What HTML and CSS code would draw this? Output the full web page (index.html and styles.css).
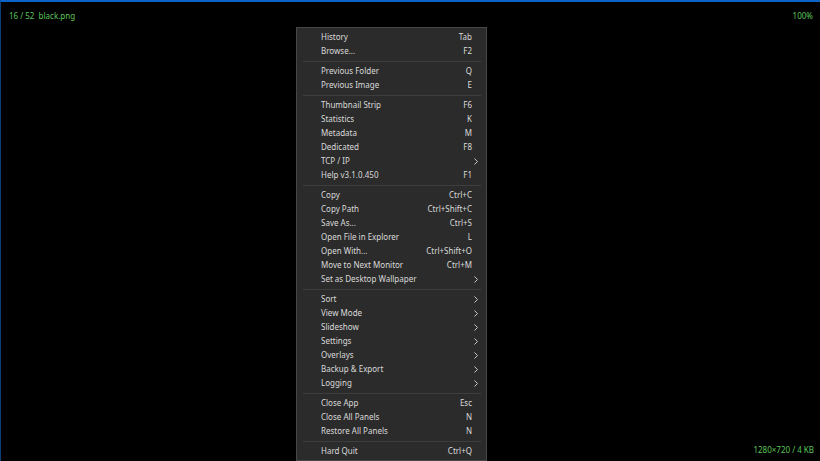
FILE: index.html
```html
<!DOCTYPE html>
<html lang="en">
<head>
    <meta charset="UTF-8">
    <title>black.png</title>
    <link rel="stylesheet" href="styles.css">
</head>
<body>
    <div class="viewer">
        <div class="status-top">
            <span>16 / 52&nbsp;&nbsp;black.png</span>
            <span>100%</span>
        </div>
        <div class="status-bottom">
            <span>1280×720 / 4 KB</span>
        </div>
    </div>

    <div class="menu">
        <div class="item"><span>History</span><span>Tab</span></div>
        <div class="item"><span>Browse...</span><span>F2</span></div>
        <div class="sep"></div>
        <div class="item"><span>Previous Folder</span><span>Q</span></div>
        <div class="item"><span>Previous Image</span><span>E</span></div>
        <div class="sep"></div>
        <div class="item"><span>Thumbnail Strip</span><span>F6</span></div>
        <div class="item"><span>Statistics</span><span>K</span></div>
        <div class="item"><span>Metadata</span><span>M</span></div>
        <div class="item"><span>Dedicated</span><span>F8</span></div>
        <div class="item sub"><span>TCP / IP</span><svg class="chev" viewBox="0 0 4 7"><path d="M0.5 0.5 L3.5 3.5 L0.5 6.5"/></svg></div>
        <div class="item"><span>Help v3.1.0.450</span><span>F1</span></div>
        <div class="sep"></div>
        <div class="item"><span>Copy</span><span>Ctrl+C</span></div>
        <div class="item"><span>Copy Path</span><span>Ctrl+Shift+C</span></div>
        <div class="item"><span>Save As...</span><span>Ctrl+S</span></div>
        <div class="item"><span>Open File in Explorer</span><span>L</span></div>
        <div class="item"><span>Open With...</span><span>Ctrl+Shift+O</span></div>
        <div class="item"><span>Move to Next Monitor</span><span>Ctrl+M</span></div>
        <div class="item sub"><span>Set as Desktop Wallpaper</span><svg class="chev" viewBox="0 0 4 7"><path d="M0.5 0.5 L3.5 3.5 L0.5 6.5"/></svg></div>
        <div class="sep"></div>
        <div class="item sub"><span>Sort</span><svg class="chev" viewBox="0 0 4 7"><path d="M0.5 0.5 L3.5 3.5 L0.5 6.5"/></svg></div>
        <div class="item sub"><span>View Mode</span><svg class="chev" viewBox="0 0 4 7"><path d="M0.5 0.5 L3.5 3.5 L0.5 6.5"/></svg></div>
        <div class="item sub"><span>Slideshow</span><svg class="chev" viewBox="0 0 4 7"><path d="M0.5 0.5 L3.5 3.5 L0.5 6.5"/></svg></div>
        <div class="item sub"><span>Settings</span><svg class="chev" viewBox="0 0 4 7"><path d="M0.5 0.5 L3.5 3.5 L0.5 6.5"/></svg></div>
        <div class="item sub"><span>Overlays</span><svg class="chev" viewBox="0 0 4 7"><path d="M0.5 0.5 L3.5 3.5 L0.5 6.5"/></svg></div>
        <div class="item sub"><span>Backup &amp; Export</span><svg class="chev" viewBox="0 0 4 7"><path d="M0.5 0.5 L3.5 3.5 L0.5 6.5"/></svg></div>
        <div class="item sub"><span>Logging</span><svg class="chev" viewBox="0 0 4 7"><path d="M0.5 0.5 L3.5 3.5 L0.5 6.5"/></svg></div>
        <div class="sep"></div>
        <div class="item"><span>Close App</span><span>Esc</span></div>
        <div class="item"><span>Close All Panels</span><span>N</span></div>
        <div class="item"><span>Restore All Panels</span><span>N</span></div>
        <div class="sep"></div>
        <div class="item"><span>Hard Quit</span><span>Ctrl+Q</span></div>
    </div>
</body>
</html>
```

FILE: styles.css
```css
html, body {
    margin: 0;
    padding: 0;
    height: 100%;
    overflow: hidden;
}
body {
    background-color: #000;
    font-family: "Noto Sans", "Open Sans", sans-serif;
    font-size: 8px;
}
.viewer {
    box-sizing: border-box;
    height: 100vh;
    display: flex;
    flex-direction: column;
    justify-content: space-between;
    border-top: 2px solid #0a64c8;
    border-left: 1px solid #0a3f7a;
    color: #5cc45c;
}
.status-top {
    display: flex;
    justify-content: space-between;
    padding: 9px 7px 0 8px;
    line-height: 10px;
}
.status-bottom {
    display: flex;
    justify-content: flex-end;
    padding: 0 6px 6px 0;
    line-height: 10px;
}
.menu {
    position: absolute;
    left: 296px;
    top: 27px;
    width: 189px;
    padding: 2px 0;
    background-color: #2b2b2b;
    border: 1px solid #474747;
    color: #dadada;
}
.item {
    display: flex;
    justify-content: space-between;
    align-items: center;
    height: 14px;
    line-height: 14px;
    padding: 0 14px 0 24px;
}
.item.sub {
    padding-right: 8px;
}
.chev {
    width: 4px;
    height: 7px;
    fill: none;
    stroke: #c8c8c8;
    stroke-width: 1;
}
.sep {
    height: 1px;
    margin: 3px 5px 2px 6px;
    background-color: #3e3e3e;
}
```
